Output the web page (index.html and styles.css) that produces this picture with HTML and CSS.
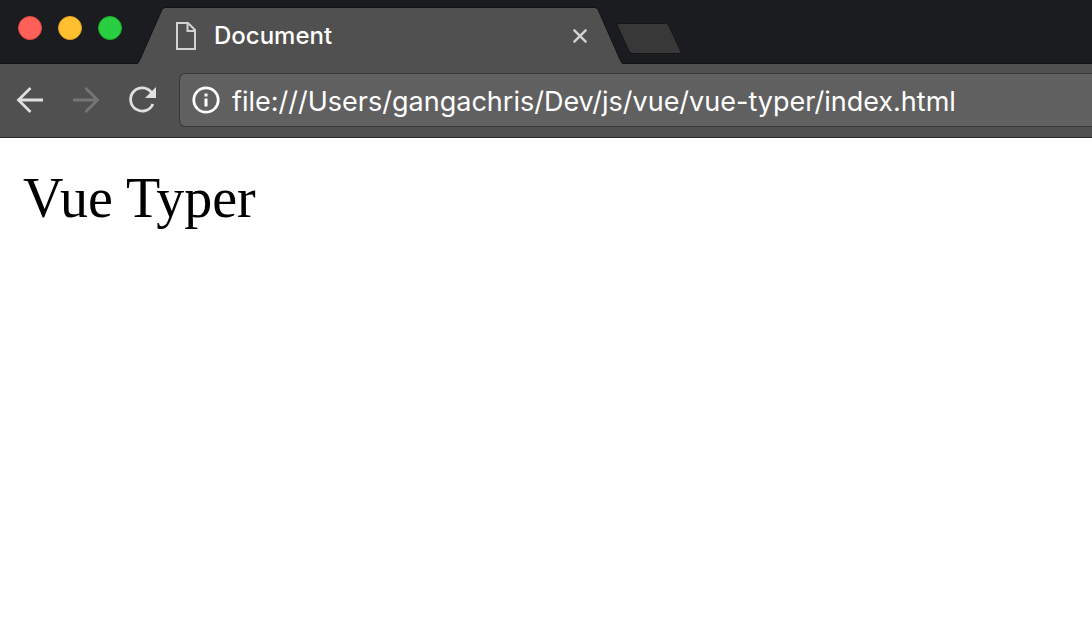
FILE: index.html
```html
<!DOCTYPE html>
<html lang="en">
<head>
<meta charset="utf-8">
<meta name="viewport" content="width=device-width, initial-scale=1">
<title>Document</title>
<link rel="stylesheet" href="styles.css">
</head>
<body>
<header class="browser">
  <div class="strip">
    <div class="lights">
      <button class="light red" aria-label="Close window"></button>
      <button class="light yellow" aria-label="Minimize window"></button>
      <button class="light green" aria-label="Zoom window"></button>
    </div>
    <div class="tab">
      <svg class="cap" width="28" height="57" viewBox="0 0 28 57" aria-hidden="true">
        <path d="M0 57Q2 56 3 53L25 3Q26 1 28 1V57Z" fill="#505050"/>
        <path d="M0 56.500Q1.500 56 2.500 53.500L25 2.500Q26 .5 28 .5" fill="none" stroke="#111214"/>
      </svg>
      <div class="tab-body">
        <svg width="20" height="28" viewBox="0 0 20 28" aria-hidden="true">
          <path d="M1 1H12L19 8V27H1Z M11.500 1V9H19" fill="none" stroke="#d2d2d2" stroke-width="2"/>
        </svg>
        <span class="tab-title">Document</span>
        <button class="close" aria-label="Close tab">
          <svg width="14" height="14" viewBox="0 0 14 14"><path d="M.7.7 13.300 13.300M13.300.7.7 13.300" fill="none" stroke="#d2d2d2" stroke-width="2.400"/></svg>
        </button>
      </div>
      <svg class="cap" width="28" height="57" viewBox="0 0 28 57" aria-hidden="true">
        <path d="M28 57Q26 56 25 53L3 3Q2 1 0 1V57Z" fill="#505050"/>
        <path d="M28 56.500Q26.500 56 25.500 53.500L3 2.500Q2 .5 0 .5" fill="none" stroke="#111214"/>
      </svg>
    </div>
    <button class="new-tab" aria-label="New tab">
      <svg width="66" height="32" viewBox="0 0 66 32"><path d="M3 .5H50Q52 .5 53 3L64 27Q66 30.500 62 30.500H17Q14 30.500 13 28L2 4Q0 .5 3 .5Z" fill="#383838" stroke="#151618"/></svg>
    </button>
  </div>
  <nav class="toolbar">
    <button class="nav" aria-label="Back">
      <svg width="28" height="28" viewBox="0 0 28 28"><path d="M27 14H3M14.500 2 2.500 14 14.500 26" fill="none" stroke="#dfdfdf" stroke-width="2.800"/></svg>
    </button>
    <button class="nav" aria-label="Forward" disabled>
      <svg width="28" height="28" viewBox="0 0 28 28"><path d="M1 14H25M13.500 2 25.500 14 13.500 26" fill="none" stroke="#757575" stroke-width="2.800"/></svg>
    </button>
    <button class="nav" aria-label="Reload">
      <svg width="28" height="28" viewBox="0 0 28 28"><path d="M23.500 6.500A11.600 11.600 0 1 0 24.900 18" fill="none" stroke="#dfdfdf" stroke-width="2.800"/><path d="M28 1V12H17Z" fill="#dfdfdf"/></svg>
    </button>
    <div class="address">
      <button class="info" aria-label="View site information">
        <svg width="28" height="28" viewBox="0 0 28 28"><circle cx="14" cy="14" r="12.200" fill="none" stroke="#fff" stroke-width="2.800"/><path d="M12.500 7.500h3v3h-3zM12.500 12.500h3v8h-3z" fill="#fff"/></svg>
      </button>
      <input class="url" type="text" aria-label="Address" value="file:///Users/gangachris/Dev/js/vue/vue-typer/index.html" spellcheck="false">
    </div>
  </nav>
</header>
<main class="page">Vue Typer</main>
</body>
</html>
```
FILE: styles.css
```css
* {
  box-sizing: border-box;
}

body {
  margin: 0;
  background: #fff;
  overflow-x: hidden;
}

button {
  margin: 0;
  padding: 0;
  border: 0;
  background: none;
}

svg {
  display: block;
  flex: none;
}

.browser {
  font-family: Inter, "Liberation Sans", sans-serif;
  color: #fff;
}

.strip {
  display: flex;
  align-items: flex-start;
  height: 64px;
  padding-left: 18px;
  background: #1b1c20;
  box-shadow: inset 0 -1px #111214;
}

.lights {
  display: flex;
  gap: 16px;
  padding-top: 16px;
}

.light {
  width: 24px;
  height: 24px;
  border-radius: 50%;
}

.red {
  background: #ff6059;
  border: 1px solid #e14942;
}

.yellow {
  background: #ffc02f;
  border: 1px solid #e0a126;
}

.green {
  background: #29ce42;
  border: 1px solid #1dae2c;
}

.tab {
  display: flex;
  flex: 0 1 486px;
  margin-top: 7px;
  margin-left: 15px;
}

.tab-body {
  display: flex;
  flex: 1;
  align-items: center;
  height: 57px;
  padding: 0 8px 0 11px;
  background: #505050;
  box-shadow: inset 0 1px #111214;
}

.tab-title {
  flex: 1;
  margin-left: 18px;
  font-size: 24px;
  font-weight: 500;
}

.new-tab {
  margin-top: 23px;
  margin-left: -7px;
}

.toolbar {
  display: flex;
  align-items: center;
  gap: 28px;
  height: 74px;
  padding-bottom: 2px;
  padding-left: 16px;
  background: #505050;
  border-bottom: 1px solid #2b2b2b;
}

.address {
  display: flex;
  flex: 1;
  align-items: center;
  gap: 12px;
  height: 54px;
  margin-left: -5px;
  padding-left: 12px;
  background: #606060;
  border: 1px solid #383838;
  border-right: 0;
  border-radius: 6px 0 0 6px;
}

.url {
  flex: 1;
  min-width: 0;
  padding: 4px 0 0;
  border: 0;
  outline: 0;
  background: none;
  color: #fff;
  font-family: inherit;
  font-size: 27px;
}

.page {
  padding: 28px 23px;
  font-family: "Liberation Serif", "Times New Roman", serif;
  font-size: 56px;
  line-height: 64px;
  color: #000;
}
```
